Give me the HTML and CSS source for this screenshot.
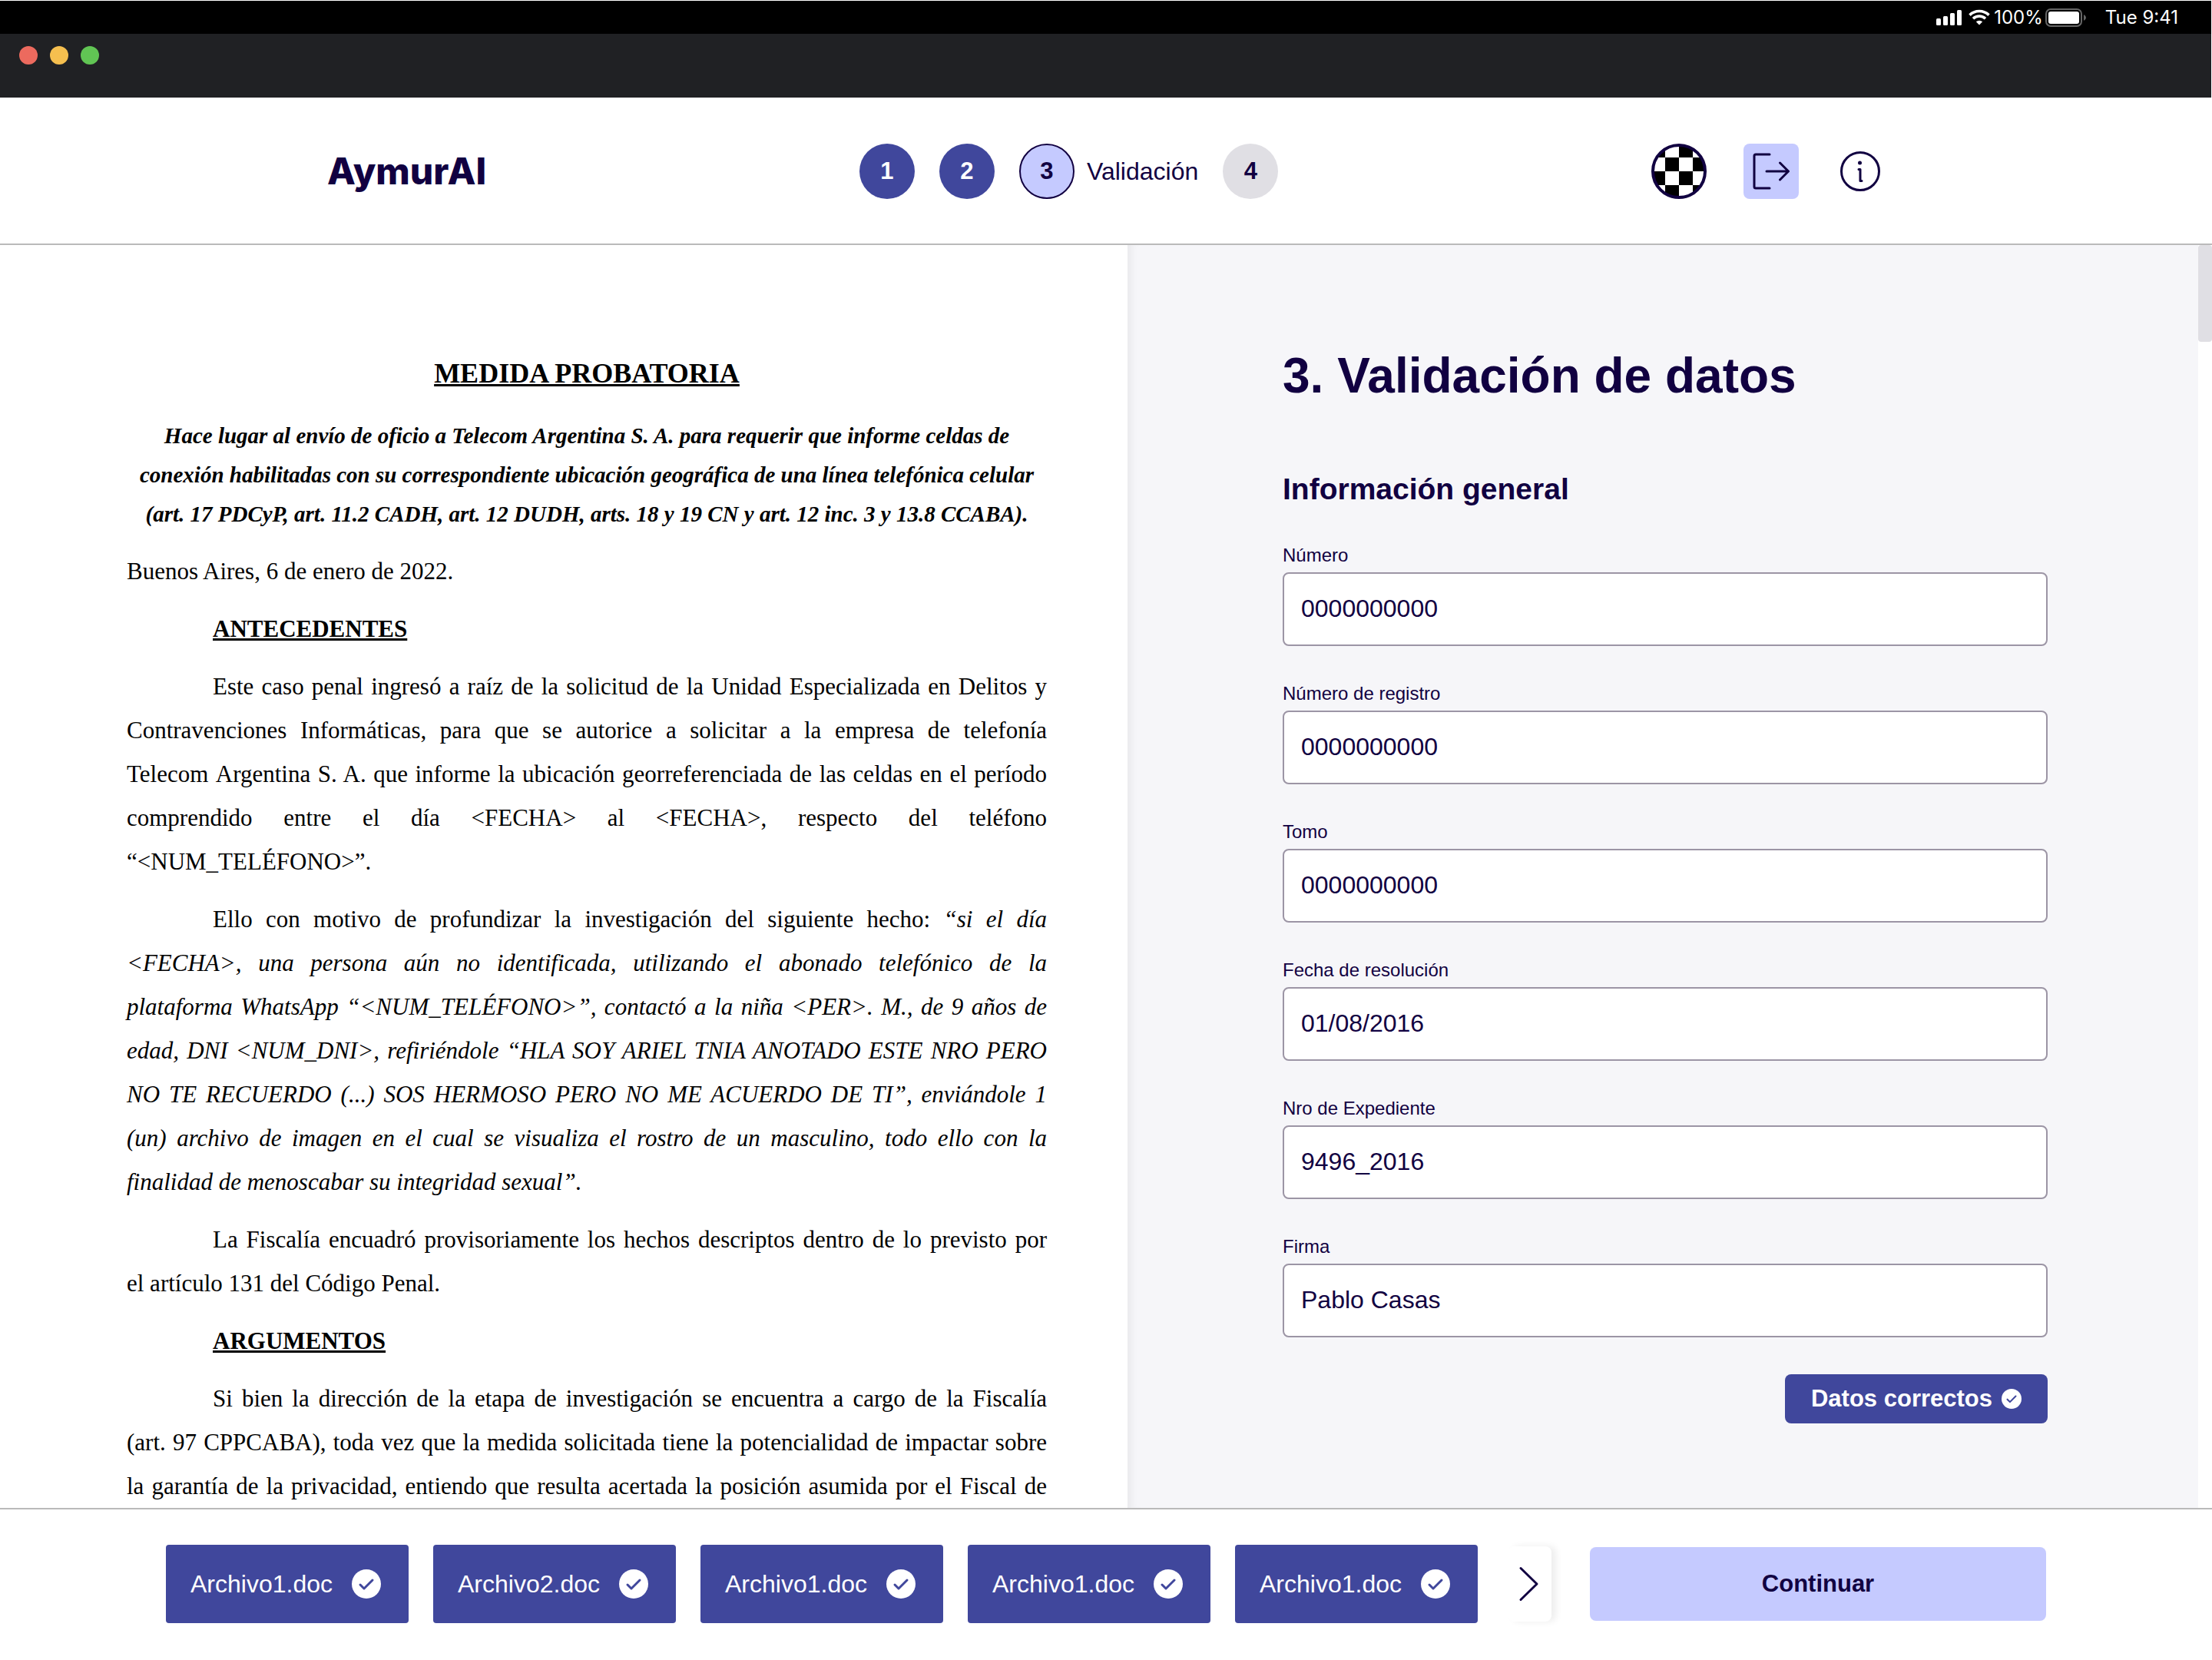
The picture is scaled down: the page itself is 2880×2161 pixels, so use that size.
FILE: index.html
```html
<!DOCTYPE html>
<html lang="es">
<head>
<meta charset="utf-8">
<meta name="viewport" content="width=device-width, initial-scale=1">
<title>AymurAI - Validación de datos</title>
<link rel="stylesheet" href="styles.css">
</head>
<body>
<svg class="sprite" aria-hidden="true">
  <symbol id="check" viewBox="0 0 38 38">
    <circle cx="19" cy="19" r="19" fill="#fff"/>
    <path d="M11 20l5 5L27 14" fill="none" stroke="#40479c" stroke-width="3" stroke-linecap="round" stroke-linejoin="round"/>
  </symbol>
</svg>

<div class="chrome">
  <div class="status">
    <svg width="34" height="24" viewBox="0 0 34 24" fill="#fff" aria-hidden="true">
      <rect x="0" y="13" width="6" height="9" rx="1.5"/><rect x="9" y="10" width="6" height="12" rx="1.5"/><rect x="18" y="6" width="6" height="16" rx="1.5"/><rect x="27" y="2" width="6" height="20" rx="1.5"/>
    </svg>
    <svg class="wifi" width="28" height="24" viewBox="0 0 28 24" fill="none" stroke="#fff" stroke-width="3.6" aria-hidden="true">
      <path d="M1.5 8.6a18 18 0 0 1 25 0M6 13.2a11.6 11.6 0 0 1 16 0"/><path d="M14 21.6l-4.2-4.3a6.2 6.2 0 0 1 8.4 0z" fill="#fff" stroke="none"/>
    </svg>
    <span>100%</span>
    <svg class="battery" width="54" height="24" viewBox="0 0 54 24" aria-hidden="true">
      <rect x="1" y="1" width="46" height="22" rx="6" fill="none" stroke="#666" stroke-width="2"/><rect x="4" y="4" width="40" height="16" rx="3" fill="#fff"/><path d="M50 8q3 1.5 3 4t-3 4z" fill="#666"/>
    </svg>
    <time>Tue 9:41</time>
  </div>
  <div class="titlebar">
    <span class="light light-red"></span><span class="light light-yellow"></span><span class="light light-green"></span>
  </div>
</div>

<header class="header">
  <a class="logo" href="#">AymurAI</a>
  <ol class="steps">
    <li class="step"><span class="dot done">1</span></li>
    <li class="step"><span class="dot done">2</span></li>
    <li class="step" aria-current="step"><span class="dot current">3</span>Validación</li>
    <li class="step"><span class="dot">4</span></li>
  </ol>
  <div class="tools">
    <svg class="avatar" width="72" height="72" viewBox="0 0 72 72" role="img" aria-label="Usuario">
      <defs><clipPath id="round"><circle cx="36" cy="36" r="35"/></clipPath></defs>
      <circle cx="36" cy="36" r="34" fill="#fff"/>
      <path clip-path="url(#round)" d="M0 0h18v18H0zM36 0h18v18H36zM18 18h18v18H18zM54 18h18v18H54zM0 36h18v18H0zM36 36h18v18H36zM18 54h18v18H18zM54 54h18v18H54z"/>
      <circle cx="36" cy="36" r="34" fill="none" stroke="#110041" stroke-width="4"/>
    </svg>
    <button class="tool tool-exit" type="button" aria-label="Salir">
      <svg width="72" height="72" viewBox="0 0 72 72" fill="none" stroke="#110041" stroke-width="3" stroke-linecap="round" stroke-linejoin="round"><path d="M34 14H16a2 2 0 0 0-2 2v40a2 2 0 0 0 2 2h18M30 36h28M47.500 25L58.500 36l-11 11"/></svg>
    </button>
    <button class="tool tool-info" type="button" aria-label="Información">
      <svg width="52" height="52" viewBox="0 0 52 52" fill="none" stroke="#110041" stroke-width="3" stroke-linecap="round" stroke-linejoin="round"><circle cx="26" cy="26" r="24.500"/><path d="M24 23.500h2v15h2"/><circle cx="25.500" cy="15" r="2.500" fill="#110041" stroke="none"/></svg>
    </button>
  </div>
</header>

<main class="main">
  <article class="doc">
    <h2 class="doc-title">MEDIDA PROBATORIA</h2>
    <p class="doc-summary">Hace lugar al envío de oficio a Telecom Argentina S. A. para requerir que informe celdas de conexión habilitadas con su correspondiente ubicación geográfica de una línea telefónica celular (art. 17 PDCyP, art. 11.2 CADH, art. 12 DUDH, arts. 18 y 19 CN y art. 12 inc. 3 y 13.8 CCABA).</p>
    <p class="doc-date">Buenos Aires, 6 de enero de 2022.</p>
    <h3 class="doc-heading">ANTECEDENTES</h3>
    <p class="doc-text">Este caso penal ingresó a raíz de la solicitud de la Unidad Especializada en Delitos y Contravenciones Informáticas, para que se autorice a solicitar a la empresa de telefonía Telecom&nbsp;Argentina S. A. que informe la ubicación georreferenciada de las celdas en el período comprendido entre el día &lt;FECHA&gt; al &lt;FECHA&gt;, respecto del teléfono “&lt;NUM_TELÉFONO&gt;”.</p>
    <p class="doc-text">Ello con motivo de profundizar la investigación del siguiente hecho: <em>“si el día &lt;FECHA&gt;, una persona aún no identificada, utilizando el abonado telefónico de la plataforma&nbsp;WhatsApp “&lt;NUM_TELÉFONO&gt;”, contactó a la niña &lt;PER&gt;. M., de 9 años de edad,&nbsp;DNI &lt;NUM_DNI&gt;, refiriéndole “HLA SOY ARIEL TNIA ANOTADO ESTE NRO PERO NO&nbsp;TE RECUERDO (...) SOS HERMOSO PERO NO ME ACUERDO DE TI”, enviándole 1 (un)&nbsp;archivo de imagen en el cual se visualiza el rostro de un masculino, todo ello con la finalidad&nbsp;de menoscabar su integridad sexual”.</em></p>
    <p class="doc-text">La Fiscalía encuadró provisoriamente los hechos descriptos dentro de lo previsto por el&nbsp;artículo 131 del Código Penal.</p>
    <h3 class="doc-heading">ARGUMENTOS</h3>
    <p class="doc-text doc-cut">Si bien la dirección de la etapa de investigación se encuentra a cargo de la Fiscalía (art.&nbsp;97 CPPCABA), toda vez que la medida solicitada tiene la potencialidad de impactar sobre la&nbsp;garantía de la privacidad, entiendo que resulta acertada la posición asumida por el Fiscal de</p>
  </article>

  <section class="panel">
    <form class="form">
      <h1 class="form-title">3. Validación de datos</h1>
      <h2 class="form-subtitle">Información general</h2>
      <div class="fields">
        <div class="field"><label for="numero">Número</label><input id="numero" type="text" value="0000000000"></div>
        <div class="field"><label for="registro">Número de registro</label><input id="registro" type="text" value="0000000000"></div>
        <div class="field"><label for="tomo">Tomo</label><input id="tomo" type="text" value="0000000000"></div>
        <div class="field"><label for="fecha">Fecha de resolución</label><input id="fecha" type="text" value="01/08/2016"></div>
        <div class="field"><label for="expediente">Nro de Expediente</label><input id="expediente" type="text" value="9496_2016"></div>
        <div class="field"><label for="firma">Firma</label><input id="firma" type="text" value="Pablo Casas"></div>
        <button class="confirm" type="button">Datos correctos<svg width="26" height="26" aria-hidden="true"><use href="#check"/></svg></button>
      </div>
    </form>
    <div class="scrollbar"><div class="thumb"></div></div>
  </section>
</main>

<footer class="footer">
  <div class="files">
    <button class="file" type="button">Archivo1.doc<svg width="38" height="38" aria-hidden="true"><use href="#check"/></svg></button>
    <button class="file" type="button">Archivo2.doc<svg width="38" height="38" aria-hidden="true"><use href="#check"/></svg></button>
    <button class="file" type="button">Archivo1.doc<svg width="38" height="38" aria-hidden="true"><use href="#check"/></svg></button>
    <button class="file" type="button">Archivo1.doc<svg width="38" height="38" aria-hidden="true"><use href="#check"/></svg></button>
    <button class="file" type="button">Archivo1.doc<svg width="38" height="38" aria-hidden="true"><use href="#check"/></svg></button>
  </div>
  <button class="next" type="button" aria-label="Más archivos">
    <svg width="56" height="98" viewBox="0 0 56 98" fill="none" stroke="#110041" stroke-width="3" stroke-linecap="round" stroke-linejoin="round"><path d="M16 28.500L37 49 16 69.500"/></svg>
  </button>
  <button class="continue" type="button">Continuar</button>
</footer>
</body>
</html>
```
FILE: styles.css
```css
:root {
  --ink: #110041;
  --primary: #40479c;
  --soft: #c5caff;
  --line: #bababa;
  --muted: #e0dfe4;
  --surface: #f6f6f9;
}

* { box-sizing: border-box; }

body {
  margin: 0;
  height: 100vh;
  display: flex;
  flex-direction: column;
  background: #fff;
  color: var(--ink);
  font: 32px "Liberation Sans", Arial, sans-serif;
}

h1, h2, h3, p, ol { margin: 0; padding: 0; }

svg { display: block; flex: none; }

button {
  margin: 0;
  padding: 0;
  border: 0;
  background: none;
  color: inherit;
  font: inherit;
  cursor: pointer;
}

.sprite { position: absolute; width: 0; height: 0; }

/* System bars */
.chrome {
  border-top: 1px solid #fff;
  border-right: 1px solid #fff;
}

.status {
  display: flex;
  align-items: center;
  justify-content: flex-end;
  height: 43px;
  padding-right: 43px;
  background: #000;
  color: #fff;
  font: 24px/43px Inter, sans-serif;
}

.wifi { margin: 0 5px 0 8px; }
.battery { margin: 0 24px 0 3px; }

.titlebar {
  display: flex;
  gap: 16px;
  height: 83px;
  padding: 16px 25px;
  background: #202124;
}

.light { width: 24px; height: 24px; border-radius: 50%; }
.light-red { background: #ec6a5e; }
.light-yellow { background: #f5bf4f; }
.light-green { background: #61c554; }

/* Header */
.header {
  display: flex;
  align-items: center;
  justify-content: space-between;
  height: 192px;
  padding: 2px 426px 0;
  border-bottom: 2px solid var(--line);
}

.logo {
  color: inherit;
  font: 800 48px/56px Inter, sans-serif;
  text-decoration: none;
}

.steps { display: flex; gap: 32px; list-style: none; }
.step { display: flex; align-items: center; gap: 16px; }

.dot {
  display: grid;
  place-items: center;
  width: 72px;
  height: 72px;
  border-radius: 50%;
  background: var(--muted);
  font-size: 31px;
  font-weight: 700;
}

.dot.done { background: var(--primary); color: #fff; }
.dot.current { border: 2px solid var(--ink); background: var(--soft); }

.tools { display: flex; align-items: center; gap: 48px; }
.tool { display: grid; place-items: center; }
.tool-exit { width: 72px; height: 72px; border-radius: 8px; background: var(--soft); }
.tool-info { width: 64px; height: 64px; }

/* Workspace */
.main {
  flex: 1;
  min-height: 0;
  display: grid;
  grid-template-columns: 367fr 353fr;
  overflow: hidden;
}

.doc {
  min-height: 0;
  overflow: hidden;
  padding: 139px 105px 0 165px;
  color: #000;
  font: 31px/57px "Liberation Serif", "Times New Roman", serif;
}

.doc-title {
  margin-bottom: 27px;
  font-size: 36px;
  text-align: center;
  text-decoration: underline;
}

.doc-summary {
  margin-bottom: 20px;
  font-size: 29px;
  font-weight: 700;
  font-style: italic;
  line-height: 51px;
  text-align: center;
}

.doc-date, .doc-heading, .doc-text { margin-bottom: 18px; }

.doc-heading {
  padding-left: 112px;
  font-size: 31px;
  text-decoration: underline;
}

.doc-text { text-align: justify; text-indent: 112px; }
.doc-cut { text-align-last: justify; }

.panel {
  display: flex;
  min-height: 0;
  background: var(--surface);
  box-shadow: inset 12px 0 12px -8px rgba(0, 0, 0, 0.06);
}

.form { flex: 1; padding: 130px 196px 0 202px; }

.form-title {
  margin-bottom: 84px;
  font-size: 64px;
  line-height: 80px;
}

.form-subtitle {
  margin-bottom: 48px;
  font-size: 39px;
  line-height: 48px;
}

.fields { display: flex; flex-direction: column; gap: 48px; }
.field { display: flex; flex-direction: column; gap: 8px; }
.field label { font-size: 24px; line-height: 28px; }

.field input {
  width: 100%;
  height: 96px;
  padding: 0 22px 2px;
  border: 2px solid #9c95a5;
  border-radius: 8px;
  background: #fff;
  color: inherit;
  font: inherit;
}

.confirm {
  align-self: flex-end;
  display: flex;
  align-items: center;
  gap: 12px;
  height: 64px;
  padding: 0 34px;
  border-radius: 8px;
  background: var(--primary);
  color: #fff;
  font-size: 31px;
  font-weight: 700;
}

.scrollbar { width: 18px; background: #fff; }
.thumb { height: 126px; border-radius: 4px; background: var(--muted); }

/* Footer */
.footer {
  display: flex;
  align-items: center;
  padding: 46px 216px 48px;
  border-top: 2px solid var(--line);
}

.files { display: flex; gap: 32px; }

.file {
  display: flex;
  align-items: center;
  justify-content: space-between;
  width: 316px;
  height: 102px;
  padding: 0 36px 0 32px;
  border-radius: 4px;
  background: var(--primary);
  color: #fff;
}

.next {
  margin: 0 50px 0 40px;
  border-radius: 8px;
  box-shadow: 6px 0 10px rgba(0, 0, 0, 0.07);
  clip-path: inset(-10px -20px -10px 0);
}

.continue {
  flex: 1;
  height: 96px;
  border-radius: 8px;
  background: var(--soft);
  font-size: 31px;
  font-weight: 700;
}
```
